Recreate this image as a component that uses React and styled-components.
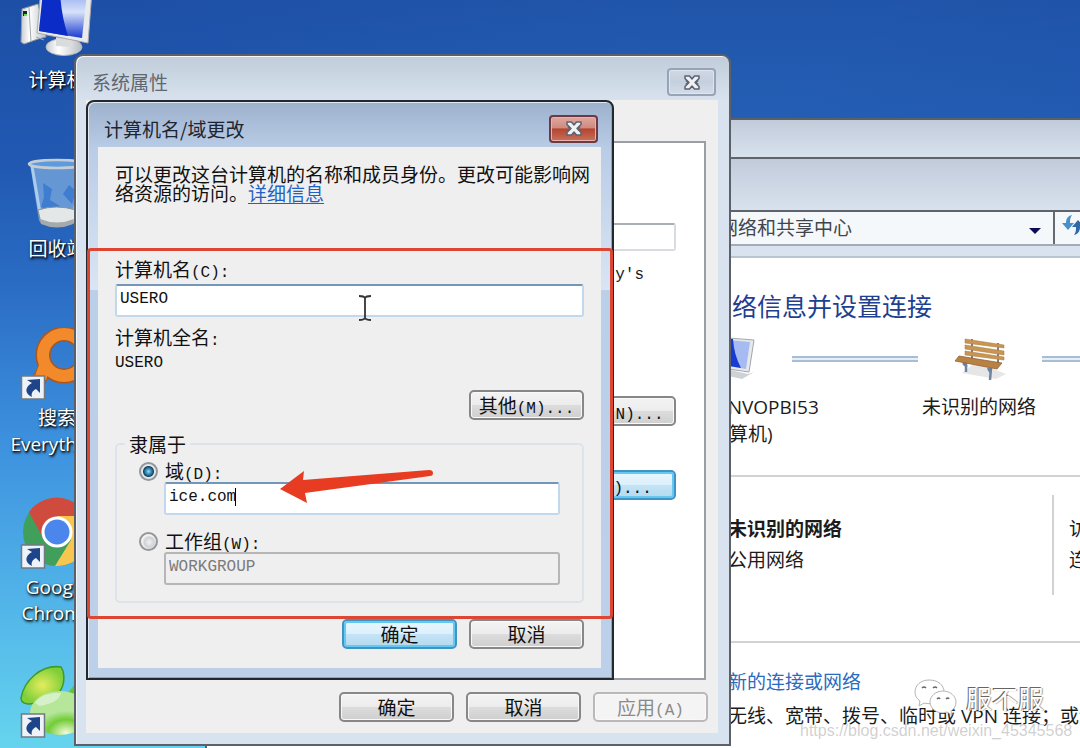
import React, { useState } from 'react';
import styled, { createGlobalStyle, css } from 'styled-components';

const GlobalStyle = createGlobalStyle`
  * { box-sizing: border-box; }
  body {
    margin: 0;
    font-family: 'Open Sans', 'Noto Sans CJK SC', sans-serif;
    font-size: 19px;
    color: #1c1c1c;
  }
  button, input { font: inherit; color: inherit; }
`;

const song = css`
  font-family: 'Noto Sans CJK SC', sans-serif;
`;

const Desktop = styled.main`
  position: relative;
  height: 100vh;
  overflow: hidden;
  background:
    radial-gradient(ellipse 700px 300px at 70% 16%, rgba(48, 120, 195, 0.25), transparent),
    linear-gradient(#1d4fa6 0, #2159b2 22%, #2a6cc4 38%, #3c8fdd 58%, #4fb0e8 78%, #66d4ee 100%);
`;

/* ---- desktop icons ---- */

const IconColumn = styled.ul`
  list-style: none;
  margin: -11px 0 0;
  padding: 0;
  width: 114px;
  display: grid;
  grid-auto-rows: 169px;
`;

const DesktopIcon = styled.li`
  display: flex;
  flex-direction: column;
  align-items: center;
  gap: 2px;
  line-height: 26px;
  text-align: center;
  color: #fff;
  text-shadow: 1px 1px 2px #000, 1px 2px 3px rgba(0, 0, 0, 0.8);

  svg { flex: none; width: 76px; height: 76px; }
`;

/* ---- windows ---- */

const Window = styled.section`
  position: absolute;
  display: flex;
  flex-direction: column;
  border-radius: 9px 9px 0 0;
`;

const NetworkWindow = styled(Window)`
  top: 118px;
  left: 205px;
  right: -60px;
  bottom: -40px;
  border: 2px solid #5b6068;
  background: #fff;
`;

const SystemWindow = styled(Window)`
  top: 54px;
  left: 74px;
  width: 657px;
  height: 692px;
  padding: 0 11px 11px 10px;
  border: 2px solid #5c6169;
  background: linear-gradient(#c1ccda 0, #d8e3ef 46px, #d8e3f0 100%);
  box-shadow: inset 1px 1px 0 #f4f7fa;
  ${song}
`;

const RenameWindow = styled(Window)`
  top: 100px;
  left: 86px;
  width: 528px;
  padding: 0 11px 10px 10px;
  border: 2px solid #23282e;
  border-radius: 8px 8px 0 0;
  background: linear-gradient(#9db1cd 0, #b9cce6 46px, #d9e5f4 188px, #bacfe8 188px, #bdd0ea 100%);
  box-shadow: inset 1px 1px 0 #dfe8f2, inset -1px -1px 0 #58bcd2;
  ${song}
`;

const TitleBar = styled.header`
  display: flex;
  align-items: center;
  justify-content: space-between;
  height: ${p => (p.$inner ? 45 : 44)}px;
  padding: ${p => (p.$inner ? '8px 3px 0 6px' : '8px 2px 0 6px')};
  color: ${p => (p.$inner ? '#1d2530' : '#5f6771')};

  h2 { margin: 0; font-size: 19px; font-weight: 400; line-height: 26px; }
`;

const CloseButton = styled.button`
  display: grid;
  place-items: center;
  width: 49px;
  height: 28px;
  padding: 0;
  border-radius: 4px;
  border: 2px solid ${p => (p.$active ? '#6b3a43' : '#98a3b8')};
  background: ${p => (p.$active
    ? 'linear-gradient(#dfa89f 0, #d08a7e 45%, #b4452f 50%, #c8705c 100%)'
    : 'linear-gradient(#cfd8e4, #c5d0de 50%, #d3dde8)')};
  box-shadow: inset 0 0 0 1px ${p => (p.$active ? '#e6b3aa' : '#dde5ee')};
`;

const Client = styled.div`
  flex: 1;
  display: flex;
  flex-direction: column;
  background: #efefef;
`;

const PushButton = styled.button`
  width: ${p => (p.$wide ? 144 : 115)}px;
  height: 30px;
  padding: 0;
  line-height: 22px;
  white-space: nowrap;
  color: #111;
  border-radius: 5px;
  border: 2px solid #878787;
  background: linear-gradient(#f3f3f3 0, #ececec 48%, #dcdcdc 52%, #cfcfcf 100%);
  box-shadow: inset 0 0 0 1px #f9f9f9;

  ${p => p.$default && css`
    border-color: #4392c4;
    background: linear-gradient(#eaf6fd 0, #dcf0fb 48%, #c4e3f6 52%, #b4d9ef 100%);
    box-shadow: inset 0 0 0 2px #63c9f3;
  `}
  &:disabled {
    color: #8a8a8a;
    border-color: #b9b9b9;
    background: #f4f4f4;
  }
`;

/* half-width latin text */
const Mono = styled.span`
  font-family: 'Liberation Mono', monospace;
  font-size: 16px;
  line-height: 1;
`;

const Row = styled.div`
  display: flex;
  justify-content: flex-end;
  gap: 12px;
`;

/* ---- system properties ---- */

const TabPanel = styled.div`
  flex: 1;
  display: flex;
  flex-direction: column;
  align-items: flex-end;
  margin: 41px 12px 0 0;
  padding: 80px 28px 0 0;
  border: 2px solid #9b9fa5;
  background: #fff;
`;

const Description = styled.input`
  width: 440px;
  height: 28px;
  border: 2px solid #d9dbe3;
  border-top-color: #a9adb5;
  border-radius: 3px;
`;

const Example = styled.p`
  margin: 9px 32px 113px 0;
  line-height: 22px;
`;

const SystemActions = styled(Row)`
  padding: 12px 10px 11px;
`;

const Spaced = styled.div`
  display: flex;
  margin-top: 44px;
`;

/* ---- computer name dialog ---- */

const Intro = styled.p`
  margin: 0;
  padding: 17px 9px 56px 17px;
  line-height: 19px;
  color: #111;

  a { color: #1f62c4; text-underline-offset: 2px; }
`;

const Form = styled.form`
  padding: 0 17px 19px;
  display: flex;
  flex-direction: column;
  color: #111;
`;

const FieldLabel = styled.label`
  line-height: 22px;
`;

const TextInput = styled.input`
  display: block;
  width: 100%;
  height: 33px;
  padding: 0 3px 4px;
  font-family: 'Liberation Mono', monospace;
  font-size: 16px;
  background: #fff;
  border: 2px solid #c2d8ec;
  border-top-color: #7396b9;
  border-radius: 3px;
  outline: none;

  &:disabled {
    color: #7b7b7b;
    background: #efefef;
    border-color: #b6b6b6;
  }
`;

const NameBlock = styled.div`
  display: flex;
  flex-direction: column;
  gap: 3px;
  margin-bottom: 9px;
`;

const FullName = styled.output`
  height: 22px;
  line-height: 20px;
  margin-bottom: 19px;
`;

const MemberOf = styled.fieldset`
  margin: 13px 0 16px;
  padding: 5px 22px 16px;
  min-width: 0;
  border: 2px solid #dce3ea;
  border-radius: 5px;

  legend { margin-left: -14px; padding: 0 4px; line-height: 22px; }
`;

const RadioLabel = styled.label`
  display: flex;
  align-items: center;
  gap: 7px;
  height: 22px;
  line-height: 22px;
`;

const Radio = styled.input`
  appearance: none;
  flex: none;
  width: 19px;
  height: 19px;
  margin: 0;
  border: 2px solid #93979b;
  border-radius: 50%;
  background: radial-gradient(circle at 55% 55%, #f2f2f2 0, #cfd1d4 5px, #f3f3f3 7px);

  &:checked {
    background: radial-gradient(circle at 50% 50%, #8fdcf2 0, #2f86b2 3px, #17425f 5px, #e4e7ea 6px);
  }
`;

const Indent = styled.div`
  position: relative;
  margin: 0 0 ${p => (p.$last ? 0 : 15)}px 25px;
`;

const Caret = styled.span`
  position: absolute;
  left: 71px;
  top: 6px;
  width: 1px;
  height: 18px;
  background: #000;
`;

/* ---- network window ---- */

const Glass = styled.div`
  height: ${p => p.$height}px;
  border-bottom: 2px solid #5f646b;
  border-radius: ${p => (p.$top ? '8px 8px 0 0' : 0)};
  background: linear-gradient(#c1cbda, #d8e2ee);
`;

const AddressBar = styled.div`
  display: flex;
  align-items: center;
  height: 34px;
  padding-left: 512px;
  background: #f5f8fb;
  border-bottom: 2px solid #a3abb6;
  color: #42464b;

  > span { flex: none; width: 306px; line-height: 30px; }
`;

const Drop = styled.button`
  align-self: stretch;
  width: 30px;
  padding: 0 8px 0 0;
  border: 0;
  border-right: 2px solid #666b72;
  background: none;
`;

const Refresh = styled.button`
  padding: 0 0 0 7px;
  border: 0;
  background: none;
`;

const Strip = styled.div`
  height: 12px;
  background: #d9e3f0;
  border-bottom: 2px solid #b9c4d1;
`;

const NetBody = styled.div`
  padding: 31px 0 0 432px;
  white-space: nowrap;

  h1 {
    margin: 0 0 14px 68px;
    font-size: 25px;
    line-height: 34px;
    font-weight: 400;
    color: #1f3f8f;
  }
`;

const MapRow = styled.div`
  display: flex;
  align-items: center;
  height: 44px;
  padding-left: 65px;
  gap: 36px;

  > * { flex: none; }
`;

const Link = styled.div`
  width: 126px;
  height: 6px;
  border: solid #a9bed4;
  border-width: 2px 0;
  background: #e6eef6;
`;

const MapLabels = styled.div`
  display: flex;
  gap: 83px;
  padding: 13px 0 27px;
  line-height: 27px;
  text-align: center;

  div { flex: none; width: 180px; }
  div + div { width: 160px; text-align: left; padding-left: 20px; }
`;

const ActiveNetwork = styled.div`
  display: flex;
  margin-left: -432px;
  padding: 18px 0 46px 521px;
  border: solid #d2d2d2;
  border-width: 2px 0;
  line-height: 31px;

  div { flex: none; width: 326px; padding: 19px 0; border-right: 2px solid #d2d2d2; }
  div + div { border: 0; padding-left: 15px; }
  strong, span { display: block; }
`;

const Setup = styled.div`
  padding: 22px 0 0 89px;
  line-height: 34px;

  a { color: #2b6bc0; text-decoration: none; }
  p { margin: 0; }
`;

/* ---- overlays ---- */

const Highlight = styled.div`
  position: absolute;
  left: 87px;
  top: 248px;
  width: 526px;
  height: 371px;
  border: 3px solid #dc4632;
  border-radius: 4px;
  pointer-events: none;
`;

const Pin = styled.svg`
  position: absolute;
  left: ${p => p.$x}px;
  top: ${p => p.$y}px;
  pointer-events: none;
`;

const Watermark = styled.div`
  position: absolute;
  left: 914px;
  top: 679px;
  display: flex;
  align-items: center;
  gap: 8px;
  font-family: 'Noto Sans CJK SC', sans-serif;
  font-size: 26px;
  line-height: 38px;
  color: #fff;
  text-shadow: -1px -1px 0 #666, 1px 0 1px #999;
`;

const Url = styled.div`
  position: absolute;
  left: 800px;
  top: 721px;
  font-family: 'Liberation Sans', sans-serif;
  font-size: 16px;
  line-height: 20px;
  color: rgba(150, 150, 150, 0.45);
`;

const Shortcut = () => (
  <g>
    <rect x="2.5" y="49" width="23" height="23" fill="#edf3f8" stroke="#717981" strokeWidth="1.5" />
    <path d="M8 53l13-1v14l-4-4c-4 2-5 5-4 8-8-4-7-10 0-14z" fill="#1e4489" />
  </g>
);

const ComputerArt = () => (
  <svg viewBox="0 0 76 76">
    <defs>
      <linearGradient id="screen" x1="0" y1="0" x2="0" y2="1">
        <stop offset="0" stopColor="#8ea7ee" /><stop offset=".45" stopColor="#d7e1fa" /><stop offset="1" stopColor="#1a3bd0" />
      </linearGradient>
      <linearGradient id="metal" x1="0" x2="1">
        <stop offset="0" stopColor="#c8ccd0" /><stop offset=".35" stopColor="#fff" /><stop offset="1" stopColor="#b9bdc0" />
      </linearGradient>
    </defs>
    <path d="M3 20l16-5 8 33-8 2-14 5-3-2z" fill="url(#metal)" stroke="#94999e" />
    <path d="M10 18l2 35M17 48l8 3" stroke="#a2a7ac" />
    <rect x="4" y="22" width="4" height="5" fill="#223" /><rect x="5" y="25" width="3" height="2" fill="#5fe34a" />
    <ellipse cx="45" cy="58" rx="18" ry="8.500" fill="url(#metal)" stroke="#b2b5b8" />
    <path d="M37 48l16 3 1 7-17-1z" fill="#d9dbdd" />
    <path d="M22 0l51 2-4 52-51-10z" fill="#e8eaec" stroke="#a7abb1" />
    <path d="M24 2l44 2-5 45-43-7z" fill="url(#screen)" />
    <path d="M24 2h17q1 24 8 45l-29-5z" fill="#0c2cc8" />
  </svg>
);

const BinArt = () => (
  <svg viewBox="0 0 76 76">
    <path d="M11 6l9 57q18 8 36 0L66 6z" fill="#a8d2f4" fillOpacity=".5" />
    <path d="M13 8l8 47M63 8l-8 47" stroke="#dcf0fd" strokeOpacity=".6" strokeWidth="3" />
    <path d="M24 25l9 6-2 11 10 6-8 5-11-4 3-10zM50 27l-6 9 9 10 4-13z" fill="#2b6fd0" opacity=".65" />
    <path d="M19 52q18-6 38 0l-2 13q-16 7-33 0z" fill="#e3e7e8" stroke="#8b9297" />
    <path d="M21 61q17 7 34 0l-1 5q-16 7-32 0z" fill="#a4a9ac" />
    <ellipse cx="38" cy="6" rx="28" ry="4" fill="#5d9be0" stroke="#c6cdd2" strokeWidth="2.500" />
  </svg>
);

const SearchArt = () => (
  <svg viewBox="0 0 76 76">
    <path d="M20 38l-4 9-5 4 14 7 4-9 8-1z" fill="#f08627" stroke="#b0581a" strokeWidth="1.500" />
    <circle cx="45" cy="28" r="21" fill="none" stroke="#a9571c" strokeWidth="15" />
    <circle cx="45" cy="28" r="21" fill="none" stroke="#f28a2c" strokeWidth="12" />
    <path d="M20 38l-3 8 10 7 4-11z" fill="#f28a2c" />
    <Shortcut />
  </svg>
);

const ChromeArt = () => (
  <svg viewBox="0 0 76 76">
    <circle cx="38" cy="36" r="34" fill="#3f9f5b" />
    <path d="M10 16A34 34 0 0 1 68 20H38L24 42z" fill="#cf4b3e" />
    <path d="M38 20h30A34 34 0 0 1 36 70l16-26z" fill="#f7c64e" />
    <circle cx="38" cy="36" r="15.500" fill="#fff" />
    <circle cx="38" cy="36" r="12.500" fill="#4b86ec" />
    <Shortcut />
  </svg>
);

const LeafArt = () => (
  <svg viewBox="0 0 76 76">
    <defs>
      <radialGradient id="leaf"><stop offset="0" stopColor="#e5ec5e" /><stop offset="1" stopColor="#7fcf3a" /></radialGradient>
      <radialGradient id="bulb" cx=".6" cy=".95"><stop offset="0" stopColor="#f3fbd8" /><stop offset=".6" stopColor="#72cc38" /><stop offset="1" stopColor="#b5e69a" /></radialGradient>
    </defs>
    <path d="M42 2C22-1 5 16 2 33c0 7 10 7 17 4 18 0 29-14 25-31z" fill="url(#leaf)" stroke="#3f9a2c" strokeWidth="1.500" />
    <path d="M46 32l12-16 6 22z" fill="#5fc43a" />
    <ellipse cx="41" cy="48" rx="30" ry="22" fill="url(#bulb)" />
    <path d="M16 38q6-11 26-10-2 10-22 13z" fill="#fff" opacity=".45" />
    <Shortcut />
  </svg>
);

const SmallPcArt = () => (
  <svg width="52" height="44" viewBox="0 0 52 44">
    <path d="M18 31l26 6 6-2-12 7-18-4z" fill="#cfd2d5" />
    <path d="M12 0l38 3-5 32-34-5z" fill="#e6e8ea" stroke="#a2a8b0" />
    <path d="M14 2l32 3-4 27-29-5z" fill="#a6bbf1" />
    <path d="M14 2h15q1 16 8 29l-24-4z" fill="#183bd2" />
  </svg>
);

const BenchArt = () => (
  <svg width="52" height="44" viewBox="0 0 52 44">
    <path d="M8 36l34 6 10-5-30-12z" fill="#e6e6e6" />
    <path d="M18 2v22M44 6v23" stroke="#74809a" strokeWidth="2" />
    <path d="M12 25v10M9 26l4 4M37 31l-1 12M34 31l3 5" stroke="#6d83a5" strokeWidth="2.500" fill="none" />
    <path d="M11 2l39 6v3L11 6zM11 8l39 6v4L11 12zM11 14l39 6v3L11 18z" fill="#c99552" stroke="#a97637" strokeWidth=".5" />
    <path d="M5 19l43 7-5 6L1 24z" fill="#b98243" stroke="#8a5a28" strokeWidth=".7" />
  </svg>
);

const CloseMark = () => (
  <svg width="18" height="15" viewBox="0 0 18 15">
    <path d="M4.500 3.500l9 8M13.500 3.500l-9 8" stroke="#5d6274" strokeWidth="6.500" strokeLinecap="butt" />
    <path d="M2 1h4.500L9 4l2.500-3H16v2.500L12 7.500l4 4V14h-4.500L9 11l-2.500 3H2v-2.500l4-4-4-4z" fill="#f1f1f1" stroke="#5d6274" strokeWidth="1.500" strokeLinejoin="round" />
  </svg>
);

const icons = [
  { art: ComputerArt, lines: ['计算机'] },
  { art: BinArt, lines: ['回收站'] },
  { art: SearchArt, lines: ['搜索', 'Everything'] },
  { art: ChromeArt, lines: ['Google', 'Chrome'] },
  { art: LeafArt, lines: [] },
];

export default function App() {
  const [name, setName] = useState('USERO');
  const [member, setMember] = useState('domain');
  const [domain, setDomain] = useState('ice.com');

  return (
    <Desktop>
      <GlobalStyle />

      <IconColumn>
        {icons.map(({ art: Art, lines }, i) => (
          <DesktopIcon key={i}>
            <Art />
            <div>{lines.map(l => <div key={l}>{l}</div>)}</div>
          </DesktopIcon>
        ))}
      </IconColumn>

      <NetworkWindow>
        <Glass $top $height={39} />
        <Glass $height={53} />
        <AddressBar>
          <span>网络和共享中心</span>
          <Drop aria-label="展开">
            <svg width="12" height="8" viewBox="0 0 12 8"><path d="M0 1h12L6 7z" fill="#0b0b57" /></svg>
          </Drop>
          <Refresh aria-label="刷新">
            <svg width="28" height="22" viewBox="0 0 28 22">
              <path d="M10 1C5 2 4 6 4 9H0l6 7 6-7H8c0-3 0-5 2-8z" fill="#4a8fc8" />
              <path d="M12 21c5-1 6-5 6-8h4l-6-7-6 7h4c0 3 0 5-2 8z" fill="#2f6aa8" />
            </svg>
          </Refresh>
        </AddressBar>
        <Strip />
        <NetBody>
          <h1>网络信息并设置连接</h1>
          <MapRow>
            <SmallPcArt />
            <Link />
            <BenchArt />
            <Link />
          </MapRow>
          <MapLabels>
            <div>WIN-2SKBNVOPBI53<br />(此计算机)</div>
            <div>未识别的网络</div>
          </MapLabels>
          <ActiveNetwork>
            <div><strong>未识别的网络</strong><span>公用网络</span></div>
            <div><span>访问类型</span><span>连接</span></div>
          </ActiveNetwork>
          <Setup>
            <a href="#setup">新的连接或网络</a>
            <p>无线、宽带、拨号、临时或 VPN 连接；或设置</p>
          </Setup>
        </NetBody>
      </NetworkWindow>

      <SystemWindow>
        <TitleBar>
          <h2>系统属性</h2>
          <CloseButton aria-label="关闭"><CloseMark /></CloseButton>
        </TitleBar>
        <Client>
          <TabPanel>
            <Description aria-label="计算机描述" />
            <Example><Mono>Mary's</Mono></Example>
            <PushButton $wide>网络 <Mono>ID(N)...</Mono></PushButton>
            <Spaced>
              <PushButton $wide $default>更改<Mono>(C)...</Mono></PushButton>
            </Spaced>
          </TabPanel>
          <SystemActions>
            <PushButton>确定</PushButton>
            <PushButton>取消</PushButton>
            <PushButton disabled>应用<Mono>(A)</Mono></PushButton>
          </SystemActions>
        </Client>
      </SystemWindow>

      <RenameWindow role="dialog" aria-labelledby="rename-title">
        <TitleBar $inner>
          <h2 id="rename-title">计算机名/域更改</h2>
          <CloseButton $active aria-label="关闭"><CloseMark /></CloseButton>
        </TitleBar>
        <Client>
          <Intro>
            可以更改这台计算机的名称和成员身份。更改可能影响网络资源的访问。<a href="#details">详细信息</a>
          </Intro>
          <Form onSubmit={e => e.preventDefault()}>
            <NameBlock>
              <FieldLabel htmlFor="name">计算机名<Mono>(C):</Mono></FieldLabel>
              <TextInput id="name" value={name} onChange={e => setName(e.target.value)} />
            </NameBlock>
            <FieldLabel htmlFor="full-name">计算机全名<Mono>:</Mono></FieldLabel>
            <FullName id="full-name"><Mono>{name}</Mono></FullName>
            <Row>
              <PushButton type="button">其他<Mono>(M)...</Mono></PushButton>
            </Row>
            <MemberOf>
              <legend>隶属于</legend>
              <RadioLabel>
                <Radio type="radio" name="member" checked={member === 'domain'} onChange={() => setMember('domain')} />
                <span>域<Mono>(D):</Mono></span>
              </RadioLabel>
              <Indent>
                <TextInput aria-label="域" value={domain} disabled={member !== 'domain'} onChange={e => setDomain(e.target.value)} />
                {member === 'domain' && <Caret />}
              </Indent>
              <RadioLabel>
                <Radio type="radio" name="member" checked={member === 'workgroup'} onChange={() => setMember('workgroup')} />
                <span>工作组<Mono>(W):</Mono></span>
              </RadioLabel>
              <Indent $last>
                <TextInput aria-label="工作组" defaultValue="WORKGROUP" disabled={member !== 'workgroup'} />
              </Indent>
            </MemberOf>
            <Row>
              <PushButton $default>确定</PushButton>
              <PushButton type="button">取消</PushButton>
            </Row>
          </Form>
        </Client>
      </RenameWindow>

      <Highlight />
      <Pin $x={279} $y={467} width="156" height="37" viewBox="0 0 156 37">
        <path d="M1 22L25 4l-1 9L150 3q4 0 4 3t-3 3L26 26l2 10z" fill="#e83c22" />
      </Pin>
      <Pin $x={358} $y={294} width="14" height="28" viewBox="0 0 14 28">
        <path d="M1 2q5 0 6 2 1-2 6-2M7 4v20M1 26q5 0 6-2 1 2 6 2" fill="none" stroke="#333" strokeWidth="1.800" />
      </Pin>

      <Watermark>
        <svg width="44" height="38" viewBox="0 0 44 38">
          <g fill="#fff" stroke="#b5b5b5" strokeWidth="1">
            <path d="M15 1C7 1 1 6 1 13c0 4 2 7 5 9l-1 5 5-3c7 2 20 0 20-11C30 6 24 1 15 1z" />
            <path d="M29 12c-7 0-13 5-13 11s6 11 13 11l4-1 5 3-1-4c3-2 5-5 5-9 0-6-6-11-13-11z" />
          </g>
          <g fill="none" stroke="#666" strokeWidth="1.500">
            <path d="M8 9q2-2 4 0M19 9q2-2 4 0M23 20q2-2 3 0M32 20q2-2 3 0" />
          </g>
        </svg>
        <span>服不服</span>
      </Watermark>
      <Url>https://blog.csdn.net/weixin_45345568</Url>
    </Desktop>
  );
}
